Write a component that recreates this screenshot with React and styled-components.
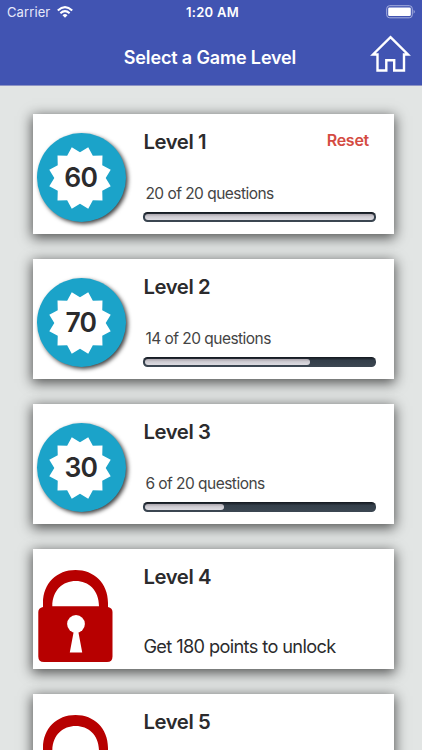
import React from "react";
import styled, { createGlobalStyle } from "styled-components";

const GlobalStyle = createGlobalStyle`
  *, *::before, *::after { box-sizing: border-box; }
  body { margin: 0; background: #e2e5e4; overflow: hidden; }
`;

const Screen = styled.div`
  width: 422px;
  height: 750px;
  overflow: hidden;
  display: flex;
  flex-direction: column;
  background: #e2e5e4;
  color: #2b2b2d;
  font-family: Inter, "Liberation Sans", sans-serif;
  white-space: nowrap;
`;

const Header = styled.header`
  flex: none;
  height: 86px;
  background: #4154b2;
  border-bottom: 1px solid #8d93c4;
  color: #fff;
`;

const StatusBar = styled.div`
  height: 24px;
  display: grid;
  grid-template-columns: 1fr auto 1fr;
  align-items: center;
  padding: 0 6px 0 7px;
`;

const Carrier = styled.div`
  display: flex;
  align-items: center;
  gap: 7px;
  font-size: 13px;
  letter-spacing: 0.1px;
  color: #e6e9fa;
`;

const Clock = styled.div`
  padding-left: 2px;
  font-size: 13px;
  font-weight: 600;
  letter-spacing: 0.25px;
`;

const BatteryIcon = styled.svg`
  justify-self: end;
  display: block;
`;

const NavBar = styled.div`
  height: 61px;
  display: grid;
  grid-template-columns: 51px 1fr 53px;
  align-items: center;
`;

const Title = styled.h1`
  grid-column: 2;
  margin: 6px 0 0;
  text-align: center;
  font-size: 18px;
  line-height: 24px;
  font-weight: 600;
  letter-spacing: -0.15px;
`;

const HomeButton = styled.button`
  border: 0;
  padding: 0;
  background: none;
  width: 42px;
  height: 38px;
  margin: -2px 0 0;
  svg { display: block; }
`;

const LevelList = styled.main`
  display: flex;
  flex-direction: column;
  gap: 25px;
  padding: 28px 28px 0 33px;
`;

const Card = styled.article`
  flex: none;
  width: 361px;
  height: 120px;
  display: flex;
  background: #fff;
  box-shadow: 0 3px 12px 1px rgba(0, 0, 0, 0.64);
`;

const Emblem = styled.div`
  flex: none;
  width: 110.4px;
  padding: ${(p) => (p.$locked ? "21px 0 0 5px" : "19px 0 0 3.5px")};
`;

const Badge = styled.div`
  width: 89px;
  height: 89px;
  border-radius: 50%;
  display: grid;
  place-items: center;
  padding-right: 1.5px;
  background: #1ba3c9;
  box-shadow: 2px 2px 4px rgba(0, 0, 0, 0.75);
  > * { grid-area: 1 / 1; }
`;

const Points = styled.span`
  margin: -1px 0 0 1px;
  font-size: 26.5px;
  line-height: 30px;
  font-weight: 560;
  letter-spacing: -0.8px;
`;

const Details = styled.div`
  flex: 1;
  display: flex;
  flex-direction: column;
`;

const TitleRow = styled.div`
  display: flex;
  justify-content: space-between;
  align-items: flex-start;
  padding: 15px 25px 0 0;
  height: 69px;
`;

const LevelName = styled.h2`
  margin: 0;
  font-size: 20.3px;
  line-height: 25px;
  font-weight: 600;
  letter-spacing: -0.4px;
`;

const ResetButton = styled.button`
  border: 0;
  padding: 0;
  margin-top: 1px;
  background: none;
  color: #d44b42;
  font: 600 16px/20px Inter, "Liberation Sans", sans-serif;
  letter-spacing: -0.25px;
`;

const Count = styled.p`
  margin: 1px 0 8px 2px;
  font-size: 15.5px;
  line-height: 20px;
  letter-spacing: -0.53px;
  color: #444;
`;

const Track = styled.div`
  width: 232.6px;
  height: 10px;
  padding: 2px;
  border-radius: 4.5px;
  background: linear-gradient(#12161d, #343f4a 35%, #3c4752);
`;

const Fill = styled.div`
  width: ${(p) => p.$width}px;
  height: 6px;
  border-radius: 3px;
  background: linear-gradient(#aaa4ac, #ceccd2 45%, #dddce2);
`;

const UnlockHint = styled.p`
  margin: 16px 0 0;
  font-size: 18.2px;
  line-height: 24px;
  letter-spacing: -0.62px;
`;

const starPoints = Array.from({ length: 24 }, (_, i) => {
  const radius = i % 2 ? 25.7 : 31.8;
  const angle = ((i * 15 + 15) * Math.PI) / 180;
  return `${32 + radius * Math.sin(angle)},${32 - radius * Math.cos(angle)}`;
}).join(" ");

const Starburst = () => (
  <svg width="64" height="64" viewBox="0 0 64 64">
    <polygon points={starPoints} fill="#fff" />
  </svg>
);

const Lock = () => (
  <svg width="75" height="93" viewBox="0 0 75 93">
    <path
      fill="#b70000"
      fillRule="evenodd"
      d="M5 37V33C5 13 19 0 37.5 0S70 13 70 33V37Q74.5 38 74.5 42V86.5Q74.5 92 69 92H6Q.3 92 .3 86.5V42Q.3 38 5 37ZM14.3 36.3H61C61 20 50.5 11 37.7 11S14.3 20 14.3 36.3Z"
    />
    <circle cx="38" cy="54" r="8.9" fill="#fff" />
    <path d="M36 60H40L44.2 82.5H31.8Z" fill="#fff" />
  </svg>
);

const levels = [
  { name: "Level 1", points: 60, done: 20, fill: 228.6, reset: true },
  { name: "Level 2", points: 70, done: 14, fill: 165 },
  { name: "Level 3", points: 30, done: 6, fill: 78.5 },
  { name: "Level 4", locked: true, hint: "Get 180 points to unlock" },
  { name: "Level 5", locked: true },
];

const LevelCard = ({ level }) => (
  <Card>
    <Emblem $locked={level.locked}>
      {level.locked ? (
        <Lock />
      ) : (
        <Badge>
          <Starburst />
          <Points>{level.points}</Points>
        </Badge>
      )}
    </Emblem>
    <Details>
      <TitleRow>
        <LevelName>{level.name}</LevelName>
        {level.reset && <ResetButton>Reset</ResetButton>}
      </TitleRow>
      {level.locked ? (
        level.hint && <UnlockHint>{level.hint}</UnlockHint>
      ) : (
        <>
          <Count>{level.done} of 20 questions</Count>
          <Track>
            <Fill $width={level.fill} />
          </Track>
        </>
      )}
    </Details>
  </Card>
);

export default function App() {
  return (
    <Screen>
      <GlobalStyle />
      <Header>
        <StatusBar>
          <Carrier>
            Carrier
            <svg width="16" height="12" viewBox="0 0 16 12" fill="none" stroke="#fff" strokeWidth="2.1">
              <path d="M.8 4.5Q8-2.1 15.2 4.5" />
              <path d="M3.4 7.2Q8 3 12.6 7.2" />
              <path d="M5.5 9.2Q8 7 10.5 9.2L8 11.7Z" fill="#fff" stroke="none" />
            </svg>
          </Carrier>
          <Clock>1:20 AM</Clock>
          <BatteryIcon width="31" height="14" viewBox="0 0 31 14">
            <rect x="1.7" y=".7" width="25.6" height="12.1" rx="3" fill="none" stroke="#a5aedd" />
            <rect x="3.2" y="2.4" width="22.6" height="8.7" rx="1.3" fill="#fff" />
            <path d="M28.6 4.8Q31 6.7 28.6 8.7Z" fill="#a5aedd" />
          </BatteryIcon>
        </StatusBar>
        <NavBar>
          <Title>Select a Game Level</Title>
          <HomeButton aria-label="Home">
            <svg width="42" height="38" viewBox="0 0 42 38" fill="none" stroke="#fff" strokeWidth="2.4">
              <path d="M21.5 2.2L39 19.5H35V35.5H25.2V25.2H17.3V35.5H8.5V19.5H4Z" />
            </svg>
          </HomeButton>
        </NavBar>
      </Header>
      <LevelList>
        {levels.map((level) => (
          <LevelCard key={level.name} level={level} />
        ))}
      </LevelList>
    </Screen>
  );
}
